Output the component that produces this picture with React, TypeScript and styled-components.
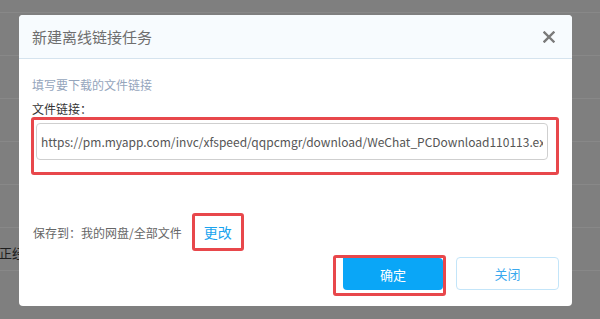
import styled, { createGlobalStyle } from 'styled-components'

const GlobalStyle = createGlobalStyle`
  html, body {
    margin: 0;
    padding: 0;
    width: 600px;
    height: 319px;
    overflow: hidden;
    background: #7f7f7f;
    font-family: "Noto Sans CJK SC", "Noto Sans", sans-serif;
  }
`

const Page = styled.div`
  position: relative;
  width: 600px;
  height: 319px;
  overflow: hidden;
`

const List = styled.div`
  display: flex;
  flex-direction: column;
  padding-top: 12px;
`

const ListRow = styled.div`
  height: 43px;
  border-top: 1px solid #888;
  display: flex;
  align-items: center;
  padding-top: 6px;
  box-sizing: border-box;
  font-size: 13px;
  color: #1e1e1e;
  text-indent: -1px;
`

const Dialog = styled.div`
  position: absolute;
  left: 19px;
  top: 15px;
  width: 553px;
  height: 291px;
  background: #fff;
  border-radius: 4px;
  overflow: hidden;
  display: flex;
  flex-direction: column;
`

const Header = styled.div`
  height: 43px;
  flex: none;
  background: #f7fbfe;
  border-bottom: 1px solid #d5e3ee;
  display: flex;
  align-items: center;
  justify-content: space-between;
  padding: 0 17px 0 13px;
`

const Title = styled.div`
  font-size: 15px;
  color: #6e6e6e;
`

const Close = styled.div`
  width: 12px;
  height: 12px;
  display: flex;
`

const Body = styled.div`
  padding: 0 13px 0 12px;
  display: flex;
  flex-direction: column;
`

const Hint = styled.div`
  margin-top: 18px;
  padding-left: 1px;
  font-size: 12px;
  line-height: 16px;
  color: #95a5bc;
`

const Label = styled.div`
  margin-top: 8px;
  padding-left: 1px;
  font-size: 12px;
  line-height: 16px;
  color: #333;
`

const Mark = styled.div<{ $pad: string }>`
  border: 3px solid #e8474b;
  border-radius: 3px;
  padding: ${p => p.$pad};
  display: flex;
  box-sizing: border-box;
`

const LinkInput = styled.input`
  flex: 1;
  width: 100%;
  height: 37px;
  box-sizing: border-box;
  border: 1px solid #cfcfcf;
  border-radius: 4px;
  padding: 0 4px;
  font-family: "Noto Sans CJK SC", "Noto Sans", sans-serif;
  font-size: 12px;
  color: #555;
  outline: none;
  background: #fff;
`

const SaveRow = styled.div`
  margin-top: 38px;
  display: flex;
  align-items: center;
  gap: 10px;
`

const SaveText = styled.span`
  font-size: 12px;
  color: #666;
  padding-left: 2px;
`

const ChangeLink = styled.span`
  font-size: 14px;
  line-height: 32px;
  color: #1aa3ee;
  padding: 0 9px;
`

const Actions = styled.div`
  margin-top: 4px;
  display: flex;
  justify-content: flex-end;
  align-items: flex-start;
  gap: 10px;
`

const Button = styled.div<{ $primary?: boolean }>`
  display: flex;
  align-items: center;
  justify-content: center;
  font-size: 13px;
  border-radius: 4px;
  box-sizing: border-box;
  ${p =>
    p.$primary
      ? `
    width: 100px;
    height: 32px;
    background: #0aa6f7;
    color: #fff;
    border-radius: 0 4px 4px 4px;
  `
      : `
    margin-top: 2px;
    width: 103px;
    height: 33px;
    background: #fff;
    color: #3aa9ee;
    border: 1px solid #c3e5f9;
  `}
`

const url = 'https://pm.myapp.com/invc/xfspeed/qqpcmgr/download/WeChat_PCDownload110113.exe'

export default function App() {
  return (
    <Page>
      <GlobalStyle />
      <List>
        <ListRow />
        <ListRow />
        <ListRow />
        <ListRow />
        <ListRow />
        <ListRow>正经</ListRow>
        <ListRow />
      </List>
      <Dialog>
        <Header>
          <Title>新建离线链接任务</Title>
          <Close>
            <svg width="12" height="12" viewBox="0 0 12 12">
              <path d="M1.5 1.5 L10.5 10.5 M10.5 1.5 L1.5 10.5" stroke="#7a7a7a" strokeWidth="2.4" strokeLinecap="square" />
            </svg>
          </Close>
        </Header>
        <Body>
          <Hint>填写要下载的文件链接</Hint>
          <Label>文件链接：</Label>
          <Mark $pad="3px 8px 12px 2px">
            <LinkInput readOnly value={url} />
          </Mark>
          <SaveRow>
            <SaveText>保存到：我的网盘/全部文件</SaveText>
            <Mark $pad="0">
              <ChangeLink>更改</ChangeLink>
            </Mark>
          </SaveRow>
          <Actions>
            <Mark $pad="0 0 3px 7px">
              <Button $primary>确定</Button>
            </Mark>
            <Button>关闭</Button>
          </Actions>
        </Body>
      </Dialog>
    </Page>
  )
}
